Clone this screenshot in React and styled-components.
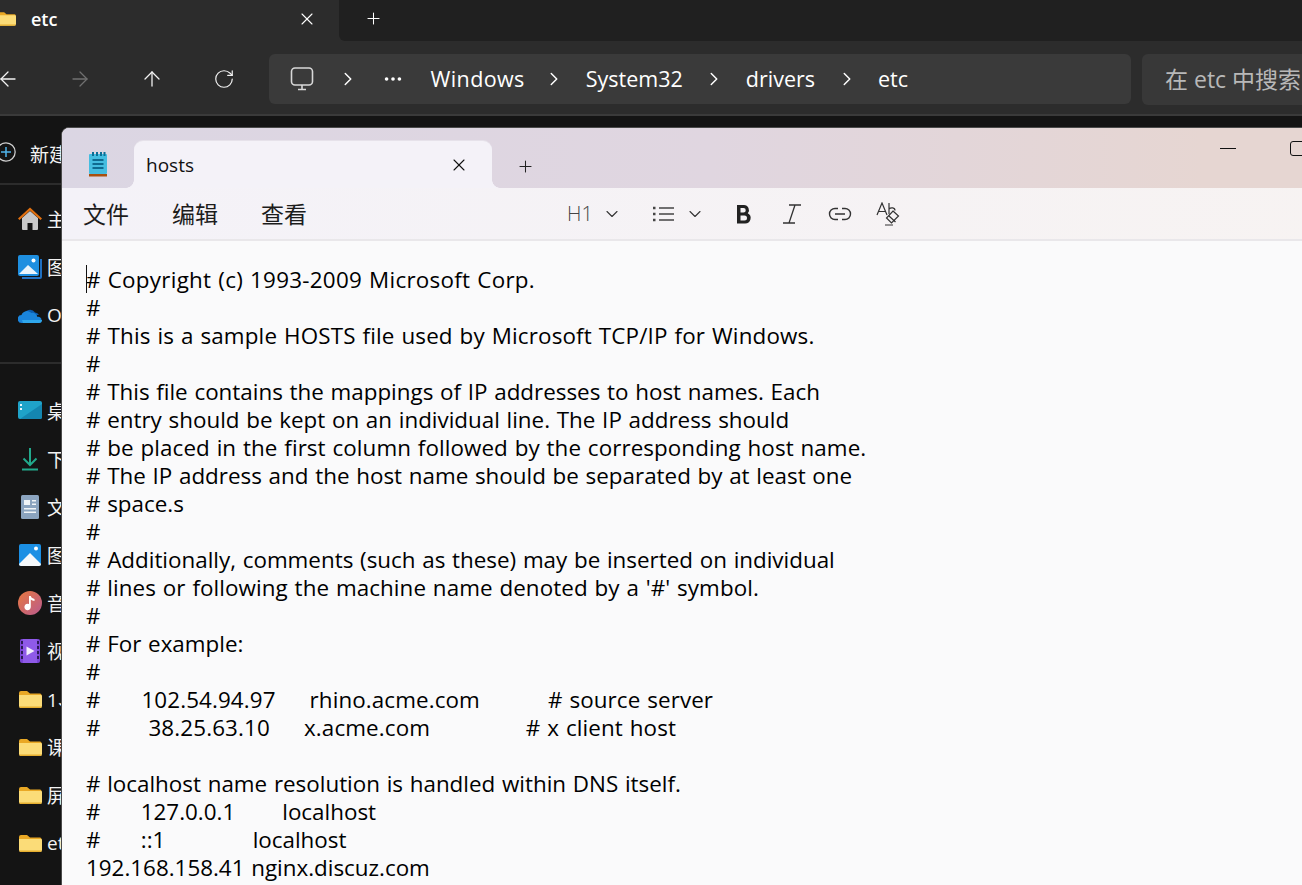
import React from "react"
import styled, { createGlobalStyle } from "styled-components"
import {
  ArrowLeft,
  ArrowRight,
  ArrowUp,
  RotateCw,
  ChevronRight,
  ChevronDown,
  Ellipsis,
  Plus,
  X,
} from "lucide-react"

const UI_FONT = `"Open Sans", "Noto Sans CJK SC", sans-serif`

// track evens out the width difference to the original font on a few lines
const hostsLines = [
  { text: "# Copyright (c) 1993-2009 Microsoft Corp.", track: 0.27 },
  { text: "#" },
  { text: "# This is a sample HOSTS file used by Microsoft TCP/IP for Windows.", track: 0.16 },
  { text: "#" },
  { text: "# This file contains the mappings of IP addresses to host names. Each" },
  { text: "# entry should be kept on an individual line. The IP address should" },
  { text: "# be placed in the first column followed by the corresponding host name.", track: 0.08 },
  { text: "# The IP address and the host name should be separated by at least one" },
  { text: "# space.s" },
  { text: "#" },
  { text: "# Additionally, comments (such as these) may be inserted on individual" },
  { text: "# lines or following the machine name denoted by a '#' symbol.", track: 0.08 },
  { text: "#" },
  { text: "# For example:" },
  { text: "#" },
  { text: "#      102.54.94.97     rhino.acme.com          # source server", track: 0.1 },
  { text: "#       38.25.63.10     x.acme.com              # x client host", track: 0.12 },
  { text: "" },
  { text: "# localhost name resolution is handled within DNS itself." },
  { text: "#      127.0.0.1       localhost" },
  { text: "#      ::1             localhost" },
  { text: "192.168.158.41 nginx.discuz.com" },
]

const GlobalStyle = createGlobalStyle`
  html, body {
    margin: 0;
    padding: 0;
    background: #141414;
  }
  * {
    box-sizing: border-box;
  }
`

const Screen = styled.div`
  position: relative;
  width: 1302px;
  height: 885px;
  overflow: hidden;
  background: #141414;
  font-family: ${UI_FONT};
`

/* explorer behind */
const TabStrip = styled.div`
  display: flex;
  align-items: center;
  height: 41px;
  background: #2c2c2c;
`
const ExplorerTab = styled.div`
  display: flex;
  align-items: center;
  width: 339px;
  height: 100%;
  padding: 0 22px 4px 0;
  color: #fff;
  font-size: 18px;
  font-weight: 600;
`
const TabFolder = styled.svg`
  width: 19px;
  height: 19px;
  margin-left: -3px;
  margin-right: 15px;
  flex: none;
`
const TabLabel = styled.span`
  flex: 1;
`
const StripRest = styled.div`
  flex: 1;
  display: flex;
  align-items: center;
  height: 100%;
  padding: 0 0 5px 25px;
  background: #202020;
  border-bottom-left-radius: 6px;
  color: #fff;
`
const NavBar = styled.div`
  display: flex;
  align-items: center;
  height: 75px;
  padding-top: 3px;
  background: #2c2c2c;
  border-bottom: 2px solid #3a3a3a;
`
const NavButtons = styled.div`
  display: flex;
  margin-left: -28px;
  flex: none;
`
const NavButton = styled.div`
  display: flex;
  align-items: center;
  justify-content: center;
  width: 72px;
  color: ${p => (p.$off ? "#707070" : "#f2f2f2")};
`
const AddressBar = styled.div`
  display: flex;
  align-items: center;
  gap: 20.5px;
  flex: none;
  width: 862px;
  height: 50px;
  margin-left: 9px;
  padding-left: 21px;
  background: #3a3a3a;
  border-radius: 6px;
  color: #fff;
  font-size: 21.5px;
`
const MonitorIcon = styled.svg`
  width: 24px;
  height: 24px;
  flex: none;
  margin-right: 2px;
`
const Crumb = styled.span`
  margin: -2px ${p => p.$after || 0}px 0 0;
  white-space: nowrap;
  letter-spacing: ${p => p.$track || 0}px;
`
const CrumbDots = styled(Ellipsis)`
  margin: 0 6px 0 3px;
  flex: none;
`
const SearchBox = styled.div`
  display: flex;
  align-items: center;
  flex: none;
  width: 170px;
  height: 51px;
  margin-left: 11px;
  padding: 0 0 2px 23px;
  background: #383838;
  border-radius: 6px 0 0 6px;
  color: #b8b8b8;
  font-size: 23px;
  white-space: nowrap;
  overflow: hidden;
`

const Sidebar = styled.nav`
  width: 61px;
  overflow: hidden;
  color: #f2f2f2;
  font-size: 19px;
`
const NewRow = styled.div`
  display: flex;
  align-items: center;
  gap: 14px;
  height: 69px;
  padding-top: 8px;
  border-bottom: 2px solid #2c2c2c;
  white-space: nowrap;
`
const NewIcon = styled.svg`
  width: 20px;
  height: 20px;
  flex: none;
  margin: -3px 0 0 -4px;
`
const SideGroup = styled.div`
  padding: ${p => p.$pad};
  border-bottom: ${p => (p.$divided ? "2px solid #2c2c2c" : "none")};
`
const SideRow = styled.div`
  display: flex;
  align-items: center;
  gap: 5px;
  height: 48px;
  padding-left: 18px;
  white-space: nowrap;
`
const SideIcon = styled.svg`
  width: 24px;
  height: 24px;
  flex: none;
`

/* notepad window on top */
const Notepad = styled.div`
  position: absolute;
  left: 61px;
  top: 127px;
  width: 1300px;
  height: 780px;
  display: flex;
  flex-direction: column;
  border: 1px solid #4a4a4a;
  border-radius: 8px 0 0 0;
  overflow: hidden;
  background: #fafafb;
`
const TitleBar = styled.div`
  display: flex;
  align-items: flex-end;
  height: 60px;
  flex: none;
  background: linear-gradient(90deg, #dbd6e3 0%, #e0d6e0 50%, #e6d6d2 88%);
`
const NoteIcon = styled.svg`
  width: 20px;
  height: 26px;
  margin: 0 26px 10px 26px;
  flex: none;
`
const FileTab = styled.div`
  position: relative;
  display: flex;
  align-items: center;
  justify-content: space-between;
  width: 358px;
  height: 47px;
  padding: 0 23px 0 12px;
  background: #f4f2f8;
  border-radius: 9px 9px 0 0;
  box-shadow: 0 -1px 0 #e6e2ea;
  color: #111;
  font-size: 19px;

  &::before,
  &::after {
    content: "";
    position: absolute;
    bottom: 0;
    width: 8px;
    height: 8px;
  }
  &::before {
    left: -8px;
    background: radial-gradient(circle at 0 0, transparent 7.5px, #f4f2f8 8px);
  }
  &::after {
    right: -8px;
    background: radial-gradient(circle at 100% 0, transparent 7.5px, #f4f2f8 8px);
  }
`
const NewTab = styled.div`
  display: flex;
  margin: 0 0 12px 24px;
  color: #222;
`
const WindowButtons = styled.div`
  display: flex;
  align-items: center;
  gap: 54px;
  flex: none;
  margin: 0 0 32px auto;
  width: 140px;
`
const MinLine = styled.span`
  display: block;
  flex: none;
  width: 16px;
  height: 1px;
  background: #111;
`
const MaxBox = styled.span`
  display: block;
  flex: none;
  width: 15px;
  height: 15px;
  border: 1.5px solid #111;
  border-radius: 3px;
`
const Toolbar = styled.div`
  display: flex;
  align-items: center;
  height: 53px;
  flex: none;
  padding-left: 21px;
  background: linear-gradient(90deg, #f4f2f8 0%, #f7f3f2 100%);
  border-bottom: 2px solid #e9e7ea;
`
const Menu = styled.div`
  display: flex;
  gap: 43px;
  margin-top: -2px;
  color: #1c1c1c;
  font-size: 23px;
`
const Format = styled.div`
  display: flex;
  align-items: center;
  margin-left: 260px;
  color: #333;
`
const HeadingLabel = styled.span`
  width: 35px;
  color: #444;
  font-size: 20px;
  font-weight: 300;
`
const ToolIcon = styled.svg`
  width: 24px;
  height: 24px;
  flex: none;
  margin-left: ${p => p.$gap || 0}px;
`
const ToolChevron = styled(ChevronDown)`
  flex: none;
  margin-left: ${p => p.$gap || 0}px;
`
const Editor = styled.div`
  flex: 1;
  padding: 25px 0 0 24px;
  background: #fafafb;
`
const Caret = styled.span`
  position: absolute;
  left: 24px;
  top: 137px;
  width: 1px;
  height: 28px;
  background: #111;
`
const Line = styled.div`
  height: 28px;
  color: #000;
  font-size: 22.4px;
  line-height: 28px;
  word-spacing: 0.9px;
  letter-spacing: ${p => p.$track || 0}px;
  white-space: pre;
`

const thin = { size: 24, strokeWidth: 1.3 }

const Folder = ({ as: Comp = SideIcon }) => (
  <Comp viewBox="0 0 24 24">
    <path d="M1 6a2 2 0 0 1 2-2h6l3 2.5h10a1.5 1.5 0 0 1 1.5 1.5v2H1z" fill="#e9a825" />
    <path d="M1 8h22a1 1 0 0 1 1 1v10a2 2 0 0 1-2 2H3a2 2 0 0 1-2-2z" fill="#fbdc78" />
    <path d="M1 19.6h23V19a2 2 0 0 1-2 2H3a2 2 0 0 1-2-1.4z" fill="#e6ae2f" />
  </Comp>
)

const icons = {
  home: (
    <SideIcon viewBox="0 0 24 24">
      <path d="M4 11 12 4l8 7v11a1 1 0 0 1-1 1h-4.500v-7h-5v7H5a1 1 0 0 1-1-1z" fill="#c9c9c9" />
      <path d="M0 11.500 12 0.500l12 11-1.500 1.500L12 3.500 1.500 13z" fill="#e2700f" />
    </SideIcon>
  ),
  gallery: (
    <SideIcon viewBox="0 0 24 24">
      <path d="M22 4h2v18a2 2 0 0 1-2 2H4v-2h18z" fill="#1f6fc0" />
      <rect x="0" y="0" width="21" height="21" rx="2" fill="#1e8fe0" />
      <path d="M1 19 10 10l10 9z" fill="#e9f4fb" />
      <circle cx="15.500" cy="5.500" r="2" fill="#fff" />
    </SideIcon>
  ),
  cloud: (
    <SideIcon viewBox="0 0 24 24">
      <path d="M6 12a6 6 0 0 1 11-2.500A5 5 0 0 1 21 12z" fill="#0c5cb0" />
      <path d="M4 20a4 4 0 0 1-.5-8 6 6 0 0 1 10-2 5 5 0 0 1 6 4 3 3 0 0 1 4 3 3 3 0 0 1-3 3z" fill="#1a84dc" />
      <path d="M5 20h16a3 3 0 0 0 3-3H4z" fill="#2fa7ec" />
    </SideIcon>
  ),
  desktop: (
    <SideIcon viewBox="0 0 24 24">
      <rect x="0" y="2" width="24" height="18" rx="2" fill="#1fa3c9" />
      <path d="M2 20 24 5v13a2 2 0 0 1-2 2z" fill="#1486b0" />
      <rect x="2" y="5" width="2" height="2" fill="#e6f6fb" />
      <rect x="2" y="9" width="2" height="2" fill="#e6f6fb" />
    </SideIcon>
  ),
  download: (
    <SideIcon viewBox="0 0 24 24" fill="none" stroke="#22a98c" strokeWidth="2">
      <path d="M12 1v17M5.500 11.500 12 18l6.500-6.500M4 22.500h16" />
    </SideIcon>
  ),
  doc: (
    <SideIcon viewBox="0 0 24 24">
      <rect x="3" y="0" width="18" height="24" rx="1.500" fill="#8ba4bf" />
      <rect x="6" y="5" width="6" height="5" fill="#f1f5f8" />
      <path d="M14 5h4v1.500h-4zM14 8.500h4V10h-4zM6 13h12v1.500H6zM6 16.500h12V18H6z" fill="#f1f5f8" />
    </SideIcon>
  ),
  picture: (
    <SideIcon viewBox="0 0 24 24">
      <rect x="1" y="1" width="22" height="22" rx="2" fill="#1b8fe4" />
      <path d="M1 21 12 10l11 11v0a2 2 0 0 1-2 2H3a2 2 0 0 1-2-2z" fill="#f4f7fa" />
      <circle cx="18" cy="5.500" r="2" fill="#fff" />
    </SideIcon>
  ),
  music: (
    <SideIcon viewBox="0 0 24 24">
      <defs>
        <linearGradient id="musicFill" x1="0" y1="0" x2="1" y2="1">
          <stop offset="0" stopColor="#e8793f" />
          <stop offset="1" stopColor="#b95a8f" />
        </linearGradient>
      </defs>
      <circle cx="12" cy="12" r="12" fill="url(#musicFill)" />
      <path d="M11 5h1.800c.4 2 2 2.500 3.700 3v2c-1.500-.2-2.800-.6-3.700-1.500V16a3.200 3.200 0 1 1-1.800-2.900z" fill="#fff" />
    </SideIcon>
  ),
  video: (
    <SideIcon viewBox="0 0 24 24">
      <rect x="2" y="0" width="20" height="24" rx="2" fill="#7a45d6" />
      <path d="M5 0h14v24H5z" fill="#8f5ae8" />
      <path d="M8.500 7.500v9l8-4.500z" fill="#f3eefc" />
      <path d="M3 2h2v3H3zM3 7h2v3H3zM3 12h2v3H3zM3 17h2v3H3zM19 2h2v3h-2zM19 7h2v3h-2zM19 12h2v3h-2zM19 17h2v3h-2z" fill="#2c1a55" />
    </SideIcon>
  ),
  folder: <Folder />,
}

const pinned = [
  { icon: "home", label: "主文件夹" },
  { icon: "gallery", label: "图库" },
  { icon: "cloud", label: "OneDrive" },
]
const places = [
  { icon: "desktop", label: "桌面" },
  { icon: "download", label: "下载" },
  { icon: "doc", label: "文档" },
  { icon: "picture", label: "图片" },
  { icon: "music", label: "音乐" },
  { icon: "video", label: "视频" },
  { icon: "folder", label: "1、" },
  { icon: "folder", label: "课程" },
  { icon: "folder", label: "屏幕" },
  { icon: "folder", label: "etc" },
]

function SideList({ items }) {
  return items.map((item, i) => (
    <SideRow key={i}>
      {icons[item.icon]}
      <span>{item.label}</span>
    </SideRow>
  ))
}

export default function App() {
  return (
    <Screen>
      <GlobalStyle />
      <TabStrip>
        <ExplorerTab>
          <Folder as={TabFolder} />
          <TabLabel>etc</TabLabel>
          <X {...thin} size={20} />
        </ExplorerTab>
        <StripRest>
          <Plus {...thin} size={19} />
        </StripRest>
      </TabStrip>
      <NavBar>
        <NavButtons>
          <NavButton><ArrowLeft {...thin} /></NavButton>
          <NavButton $off><ArrowRight {...thin} /></NavButton>
          <NavButton><ArrowUp {...thin} /></NavButton>
          <NavButton><RotateCw {...thin} size={22} /></NavButton>
        </NavButtons>
        <AddressBar>
          <MonitorIcon viewBox="0 0 24 24" fill="none" stroke="#d8d8d8" strokeWidth="1.600">
            <rect x="1.500" y="1" width="21" height="17" rx="3.500" />
            <path d="M8 22.500h8M12 18v4.500" />
          </MonitorIcon>
          <ChevronRight {...thin} strokeWidth={1.6} size={22} />
          <CrumbDots {...thin} strokeWidth={2} size={22} />
          <Crumb $track={0.4} $after={-2}>Windows</Crumb>
          <ChevronRight {...thin} strokeWidth={1.6} size={22} />
          <Crumb>System32</Crumb>
          <ChevronRight {...thin} strokeWidth={1.6} size={22} />
          <Crumb>drivers</Crumb>
          <ChevronRight {...thin} strokeWidth={1.6} size={22} />
          <Crumb>etc</Crumb>
        </AddressBar>
        <SearchBox>在 etc 中搜索</SearchBox>
      </NavBar>
      <Sidebar>
        <NewRow>
          <NewIcon viewBox="0 0 24 24" fill="none">
            <circle cx="12" cy="12" r="11" stroke="#d0d0d0" strokeWidth="1.500" />
            <path d="M12 6v12M6 12h12" stroke="#4fb3ea" strokeWidth="1.800" />
          </NewIcon>
          <span>新建</span>
        </NewRow>
        <SideGroup $pad="10px 0 23px" $divided>
          <SideList items={pinned} />
        </SideGroup>
        <SideGroup $pad="23px 0 0">
          <SideList items={places} />
        </SideGroup>
      </Sidebar>

      <Notepad>
        <TitleBar>
          <NoteIcon viewBox="0 0 20 26">
            <rect x="1" y="2" width="18" height="20" rx="1" fill="#45bde0" />
            <path d="M4 0h2v4H4zM8 0h2v4H8zM12 0h2v4h-2zM15.500 0h2v4h-2z" fill="#0c6f96" />
            <path d="M4.500 7h11v2h-11zM4.500 11h11v2h-11zM4.500 15h11v2h-11z" fill="#0f6a90" />
            <rect x="1" y="22" width="18" height="2.500" fill="#a9500f" />
          </NoteIcon>
          <FileTab>
            hosts
            <X {...thin} size={20} />
          </FileTab>
          <NewTab><Plus {...thin} size={19} /></NewTab>
          <WindowButtons>
            <MinLine />
            <MaxBox />
          </WindowButtons>
        </TitleBar>
        <Toolbar>
          <Menu>
            <span>文件</span>
            <span>编辑</span>
            <span>查看</span>
          </Menu>
          <Format>
            <HeadingLabel>H1</HeadingLabel>
            <ToolChevron {...thin} size={20} />
            <ToolIcon $gap={29} viewBox="0 0 24 24" fill="none" stroke="#444" strokeWidth="1.500">
              <path d="M8 6h15M8 12h15M8 18h15" />
              <path d="M2 6h2.500M2 12h2.500M2 18h2.500" strokeWidth="2.500" />
            </ToolIcon>
            <ToolChevron {...thin} size={20} $gap={10} />
            <ToolIcon $gap={26} viewBox="0 0 24 24" fill="#222">
              <path fillRule="evenodd" d="M6 3h7a5 5 0 0 1 3.800 8.200A5.500 5.500 0 0 1 14 21.500H6zM9.500 6v4.500H12.500a2.250 2.250 0 0 0 0-4.500zM9.500 13.500v5H13.500a2.500 2.500 0 0 0 0-5z" />
            </ToolIcon>
            <ToolIcon $gap={25} viewBox="0 0 24 24" fill="none" stroke="#333" strokeWidth="1.300">
              <path d="M9 3h12M3 21h12M15 3 9 21" />
            </ToolIcon>
            <ToolIcon $gap={24} viewBox="0 0 24 24" fill="none" stroke="#333" strokeWidth="1.400">
              <path d="M10 6.500H7a5.500 5.500 0 0 0 0 11h3M14 6.500h3a5.500 5.500 0 0 1 0 11h-3M7 12h10" />
            </ToolIcon>
            <ToolIcon $gap={24} viewBox="0 0 24 24" fill="none" stroke="#333" strokeWidth="1.200">
              <path d="M1 13 6 1l5 12M2.500 9.500h7" />
              <path d="M13 1v11M13 7c2-2 6-1.500 6 1.500" />
              <path d="m17 9 5.500 5-7 7-5-5zM12.500 13.500l7 6.500M9 23h8" />
            </ToolIcon>
          </Format>
        </Toolbar>
        <Editor>
          <Caret />
          {hostsLines.map((line, i) => (
            <Line key={i} $track={line.track}>{line.text}</Line>
          ))}
        </Editor>
      </Notepad>
    </Screen>
  )
}
